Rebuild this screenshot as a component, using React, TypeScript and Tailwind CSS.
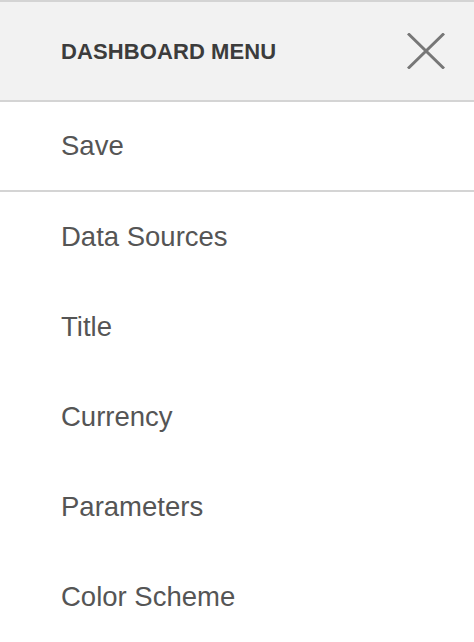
const items = ["Data Sources", "Title", "Currency", "Parameters", "Color Scheme"];

const App = () => {
  return (
    <div className="w-[474px] h-[642px] overflow-hidden bg-white font-['Liberation_Sans',Arial,sans-serif]">
      <div className="flex items-center justify-between h-[102px] border-y-2 border-[#d4d4d4] bg-[#f2f2f2] pl-[61px] pr-[29px]">
        <h1 className="text-[22px] font-bold text-[#3c3c3c] tracking-[0.1px]">DASHBOARD MENU</h1>
        <button type="button" aria-label="Close" className="block">
          <svg width="38" height="36" viewBox="0 0 38 36" fill="none">
            <path d="M1 0.5L37 35.5M37 0.5L1 35.5" stroke="#777777" strokeWidth="3" />
          </svg>
        </button>
      </div>
      <div className="flex items-center h-[90px] border-b-2 border-[#d4d4d4] pl-[61px] text-[27.5px] text-[#555555]">Save</div>
      <ul>
        {items.map((item) => (
          <li key={item} className="flex items-center h-[90px] pl-[61px] text-[27.5px] text-[#555555]">
            {item}
          </li>
        ))}
      </ul>
    </div>
  );
};

export default App;
